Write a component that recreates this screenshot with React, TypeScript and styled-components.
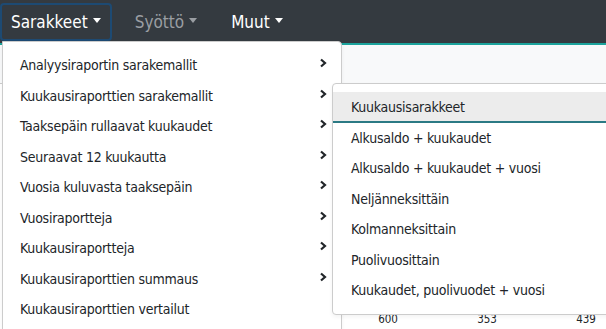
import styled, { createGlobalStyle } from 'styled-components';

const GlobalStyle = createGlobalStyle`
  body {
    margin: 0;
    font-family: "DejaVu Sans Condensed", "DejaVu Sans", sans-serif;
    color: #212529;
  }
`

const Page = styled.div`
  position: relative;
  width: 606px;
  height: 329px;
  overflow: hidden;
  background: #fff;
`

const Navbar = styled.nav`
  height: 43px;
  background: #343a40;
  border-bottom: 2px solid #1ba39c;
  display: flex;
  align-items: center;
  gap: 12px;
`

const NavItem = styled.button<{ $muted?: boolean; $focused?: boolean }>`
  height: 38px;
  display: flex;
  align-items: center;
  gap: 5px;
  padding: 0 9px;
  margin-top: 1px;
  background: transparent;
  border: 2px solid ${p => (p.$focused ? '#1d4a73' : 'transparent')};
  border-radius: 4px;
  font-family: inherit;
  font-size: 17px;
  color: ${p => (p.$muted ? '#9a9ea3' : '#fff')};
`

const Caret = styled.span`
  width: 0;
  height: 0;
  border-left: 4.5px solid transparent;
  border-right: 4.5px solid transparent;
  border-top: 5px solid currentColor;
  margin-top: -3px;
`

const Toolbar = styled.div`
  height: 38px;
  background: #f8f9fa;
  border-bottom: 1px solid #ccc;
`

const Table = styled.div`
  height: 245px;
  display: flex;
  flex-direction: column;
  justify-content: flex-end;
`

const NumberRow = styled.div`
  display: grid;
  grid-template-columns: 368px 40px 59px 40px 59px 40px;
  justify-items: center;
  height: 16px;
  font-size: 11.5px;
  padding-bottom: 1px;
`

const Menu = styled.ul<{ $left: number; $top: number; $width: number; $first?: boolean }>`
  position: absolute;
  left: ${p => p.$left}px;
  top: ${p => p.$top}px;
  width: ${p => p.$width}px;
  margin: 0;
  padding: ${p => (p.$first ? '8px 0 14px' : '8px 0')};
  list-style: none;
  background: #fff;
  border: 1px solid #ccc;
  border-radius: ${p => (p.$first ? '0 4px 4px 4px' : '4px 0 0 4px')};
  box-shadow: 0 2px 4px rgba(0, 0, 0, 0.05);
`

const MenuItem = styled.li<{ $active?: boolean; $indent: number }>`
  height: 30.5px;
  box-sizing: border-box;
  display: flex;
  align-items: center;
  justify-content: space-between;
  padding: 0 14px 0 ${p => p.$indent}px;
  font-size: 14px;
  letter-spacing: -0.25px;
  white-space: nowrap;
  background: ${p => (p.$active ? '#ececec' : 'transparent')};
  border-bottom: 2px solid ${p => (p.$active ? '#2b7a84' : 'transparent')};
  border-top: 2px solid transparent;
`

const Chevron = () => (
  <svg width="8" height="10" viewBox="0 0 8 10" style={{ marginTop: -4 }}>
    <polyline points="2,1.5 6,5 2,8.5" fill="none" stroke="#212529" strokeWidth="2.2" />
  </svg>
)

const mainItems = [
  { label: 'Analyysiraportin sarakemallit', sub: true },
  { label: 'Kuukausiraporttien sarakemallit', sub: true },
  { label: 'Taaksepäin rullaavat kuukaudet', sub: true },
  { label: 'Seuraavat 12 kuukautta', sub: true },
  { label: 'Vuosia kuluvasta taaksepäin', sub: true },
  { label: 'Vuosiraportteja', sub: true },
  { label: 'Kuukausiraportteja', sub: true },
  { label: 'Kuukausiraporttien summaus', sub: true },
  { label: 'Kuukausiraporttien vertailut', sub: false },
]

const subItems = [
  'Kuukausisarakkeet',
  'Alkusaldo + kuukaudet',
  'Alkusaldo + kuukaudet + vuosi',
  'Neljänneksittäin',
  'Kolmanneksittain',
  'Puolivuosittain',
  'Kuukaudet, puolivuodet + vuosi',
]

const App = () => {
  return (
    <Page>
      <GlobalStyle />
      <Navbar>
        <NavItem $focused>Sarakkeet<Caret /></NavItem>
        <NavItem $muted>Syöttö<Caret /></NavItem>
        <NavItem>Muut<Caret /></NavItem>
      </Navbar>
      <Toolbar />
      <Table>
        <NumberRow>
          <span />
          <span>600</span>
          <span />
          <span>353</span>
          <span />
          <span>439</span>
        </NumberRow>
      </Table>

      <Menu $left={2} $top={41} $width={338} $first>
        {mainItems.map(item => (
          <MenuItem key={item.label} $indent={17}>
            {item.label}
            {item.sub && <Chevron />}
          </MenuItem>
        ))}
      </Menu>

      <Menu $left={332} $top={83} $width={290}>
        {subItems.map((label, i) => (
          <MenuItem key={label} $indent={18} $active={i === 0}>
            {label}
          </MenuItem>
        ))}
      </Menu>
    </Page>
  );
}

export default App;
